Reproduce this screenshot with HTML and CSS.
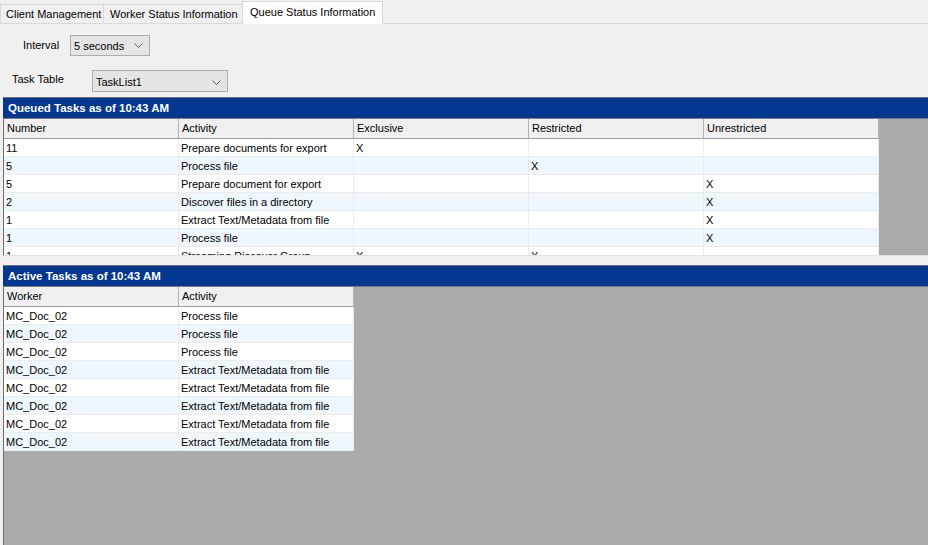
FILE: index.html
```html
<!DOCTYPE html>
<html>
<head>
<meta charset="utf-8">
<link rel="stylesheet" href="styles.css">
</head>
<body>
<div class="app">
  <div class="tabs">
    <div class="tab t1">Client Management</div>
    <div class="tab t2">Worker Status Information</div>
    <div class="tab t3 active">Queue Status Information</div>
  </div>
  <div class="controls">
    <div class="row r1">
      <span class="label l1">Interval</span>
      <div class="combo c1"><span>5 seconds</span><svg class="chev" width="9" height="5" viewBox="0 0 9 5"><polyline points="0.5,0.5 4.5,4.5 8.5,0.5" fill="none" stroke="#606060" stroke-width="1"/></svg></div>
    </div>
    <div class="row r2">
      <span class="label l2">Task Table</span>
      <div class="combo c2"><span>TaskList1</span><svg class="chev" width="9" height="5" viewBox="0 0 9 5"><polyline points="0.5,0.5 4.5,4.5 8.5,0.5" fill="none" stroke="#606060" stroke-width="1"/></svg></div>
    </div>
  </div>
  <div class="panel top">
    <div class="title">Queued Tasks as of 10:43 AM</div>
    <div class="area area-top">
      <div class="grid g5">
        <div class="hd">Number</div><div class="hd">Activity</div><div class="hd">Exclusive</div><div class="hd">Restricted</div><div class="hd">Unrestricted</div>
        <div class="c">11</div><div class="c">Prepare documents for export</div><div class="c">X</div><div class="c"></div><div class="c"></div>
        <div class="c alt">5</div><div class="c alt">Process file</div><div class="c alt"></div><div class="c alt">X</div><div class="c alt"></div>
        <div class="c">5</div><div class="c">Prepare document for export</div><div class="c"></div><div class="c"></div><div class="c">X</div>
        <div class="c alt">2</div><div class="c alt">Discover files in a directory</div><div class="c alt"></div><div class="c alt"></div><div class="c alt">X</div>
        <div class="c">1</div><div class="c">Extract Text/Metadata from file</div><div class="c"></div><div class="c"></div><div class="c">X</div>
        <div class="c alt">1</div><div class="c alt">Process file</div><div class="c alt"></div><div class="c alt"></div><div class="c alt">X</div>
        <div class="c">1</div><div class="c">Streaming Discover Group</div><div class="c">X</div><div class="c">X</div><div class="c"></div>
      </div>
    </div>
  </div>
  <div class="splitter"></div>
  <div class="panel bottom">
    <div class="title">Active Tasks as of 10:43 AM</div>
    <div class="area area-bottom">
      <div class="grid g2">
        <div class="hd">Worker</div><div class="hd">Activity</div>
        <div class="c">MC_Doc_02</div><div class="c">Process file</div>
        <div class="c alt">MC_Doc_02</div><div class="c alt">Process file</div>
        <div class="c">MC_Doc_02</div><div class="c">Process file</div>
        <div class="c alt">MC_Doc_02</div><div class="c alt">Extract Text/Metadata from file</div>
        <div class="c">MC_Doc_02</div><div class="c">Extract Text/Metadata from file</div>
        <div class="c alt">MC_Doc_02</div><div class="c alt">Extract Text/Metadata from file</div>
        <div class="c">MC_Doc_02</div><div class="c">Extract Text/Metadata from file</div>
        <div class="c alt">MC_Doc_02</div><div class="c alt">Extract Text/Metadata from file</div>
      </div>
    </div>
  </div>
</div>
</body>
</html>
```

FILE: styles.css
```css
html, body {
  margin: 0;
  padding: 0;
}
body {
  background: #f0f0f0;
  font-family: "Liberation Sans", Arial, sans-serif;
  font-size: 11px;
  color: #000;
  width: 928px;
  height: 545px;
  overflow: hidden;
}
.app {
  display: flex;
  flex-direction: column;
  width: 928px;
  height: 545px;
}
.tabs {
  display: flex;
  align-items: flex-end;
  height: 23px;
  border-bottom: 1px solid #d9d9d9;
  flex: none;
}
.tab {
  box-sizing: border-box;
  height: 19px;
  line-height: 18px;
  border: 1px solid #d9d9d9;
  border-bottom: none;
  background: #f0f0f0;
  white-space: nowrap;
}
.t1 { width: 104px; padding-left: 5px; }
.t2 { width: 140px; padding-left: 6px; margin-left: -1px; }
.t3 {
  width: 141px;
  padding-left: 7px;
  margin-left: -1px;
  height: 23px;
  line-height: 20px;
  margin-bottom: -1px;
  background: #ffffff;
}
.controls {
  height: 73px;
  flex: none;
  display: flex;
  flex-direction: column;
}
.row {
  display: flex;
  align-items: center;
}
.r1 { padding-left: 23px; margin-top: 11px; }
.r2 { padding-left: 12px; margin-top: 14px; }
.label { display: inline-block; }
.l1 { width: 47px; margin-top: -2px; }
.l2 { width: 80px; margin-top: -4px; }
.combo {
  box-sizing: border-box;
  display: flex;
  align-items: center;
  justify-content: space-between;
  border: 1px solid #adadad;
  background: #e5e5e5;
  padding: 0 6px 0 3px;
}
.c1 { width: 80px; height: 21px; }
.c2 { width: 136px; height: 22px; padding-top: 2px; }
.chev { display: block; }
.panel {
  margin-left: 3px;
  display: flex;
  flex-direction: column;
}
.title {
  box-sizing: border-box;
  height: 22px;
  border-top: 1px solid #6e6e6e;
  border-bottom: 1px solid #7d7d7d;
  background: #04378f;
  color: #ffffff;
  font-weight: bold;
  font-size: 11.5px;
  line-height: 20px;
  padding-left: 5px;
  white-space: nowrap;
}
.area {
  background: #ababab;
  border-left: 1px solid #6e6e6e;
  overflow: hidden;
}
.area-top {
  height: 136px;
  border-bottom: 1px solid #e3e3e3;
  flex: none;
}
.top { flex: none; }
.bottom { flex: 1; min-height: 0; }
.area-bottom { flex: 1; }
.splitter {
  height: 9px;
  flex: none;
}
.grid {
  display: grid;
  grid-auto-rows: 18px;
  background: #ffffff;
}
.g5 { grid-template-columns: repeat(5, 175px); width: 875px; }
.g2 { grid-template-columns: repeat(2, 175px); width: 350px; }
.g5, .g2 { grid-template-rows: 20px; }
.hd {
  box-sizing: border-box;
  height: 20px;
  background: #f0f0f0;
  border-bottom: 1px solid #a0a0a0;
  border-right: 1px solid #b4b4b4;
  padding-left: 3px;
  line-height: 19px;
  white-space: nowrap;
}
.c {
  box-sizing: border-box;
  height: 18px;
  border-bottom: 1px solid #ececec;
  border-right: 1px solid #ececec;
  padding-left: 2px;
  line-height: 19px;
  white-space: nowrap;
  overflow: hidden;
  background: #ffffff;
}
.c.alt { background: #eef6fe; }
```
